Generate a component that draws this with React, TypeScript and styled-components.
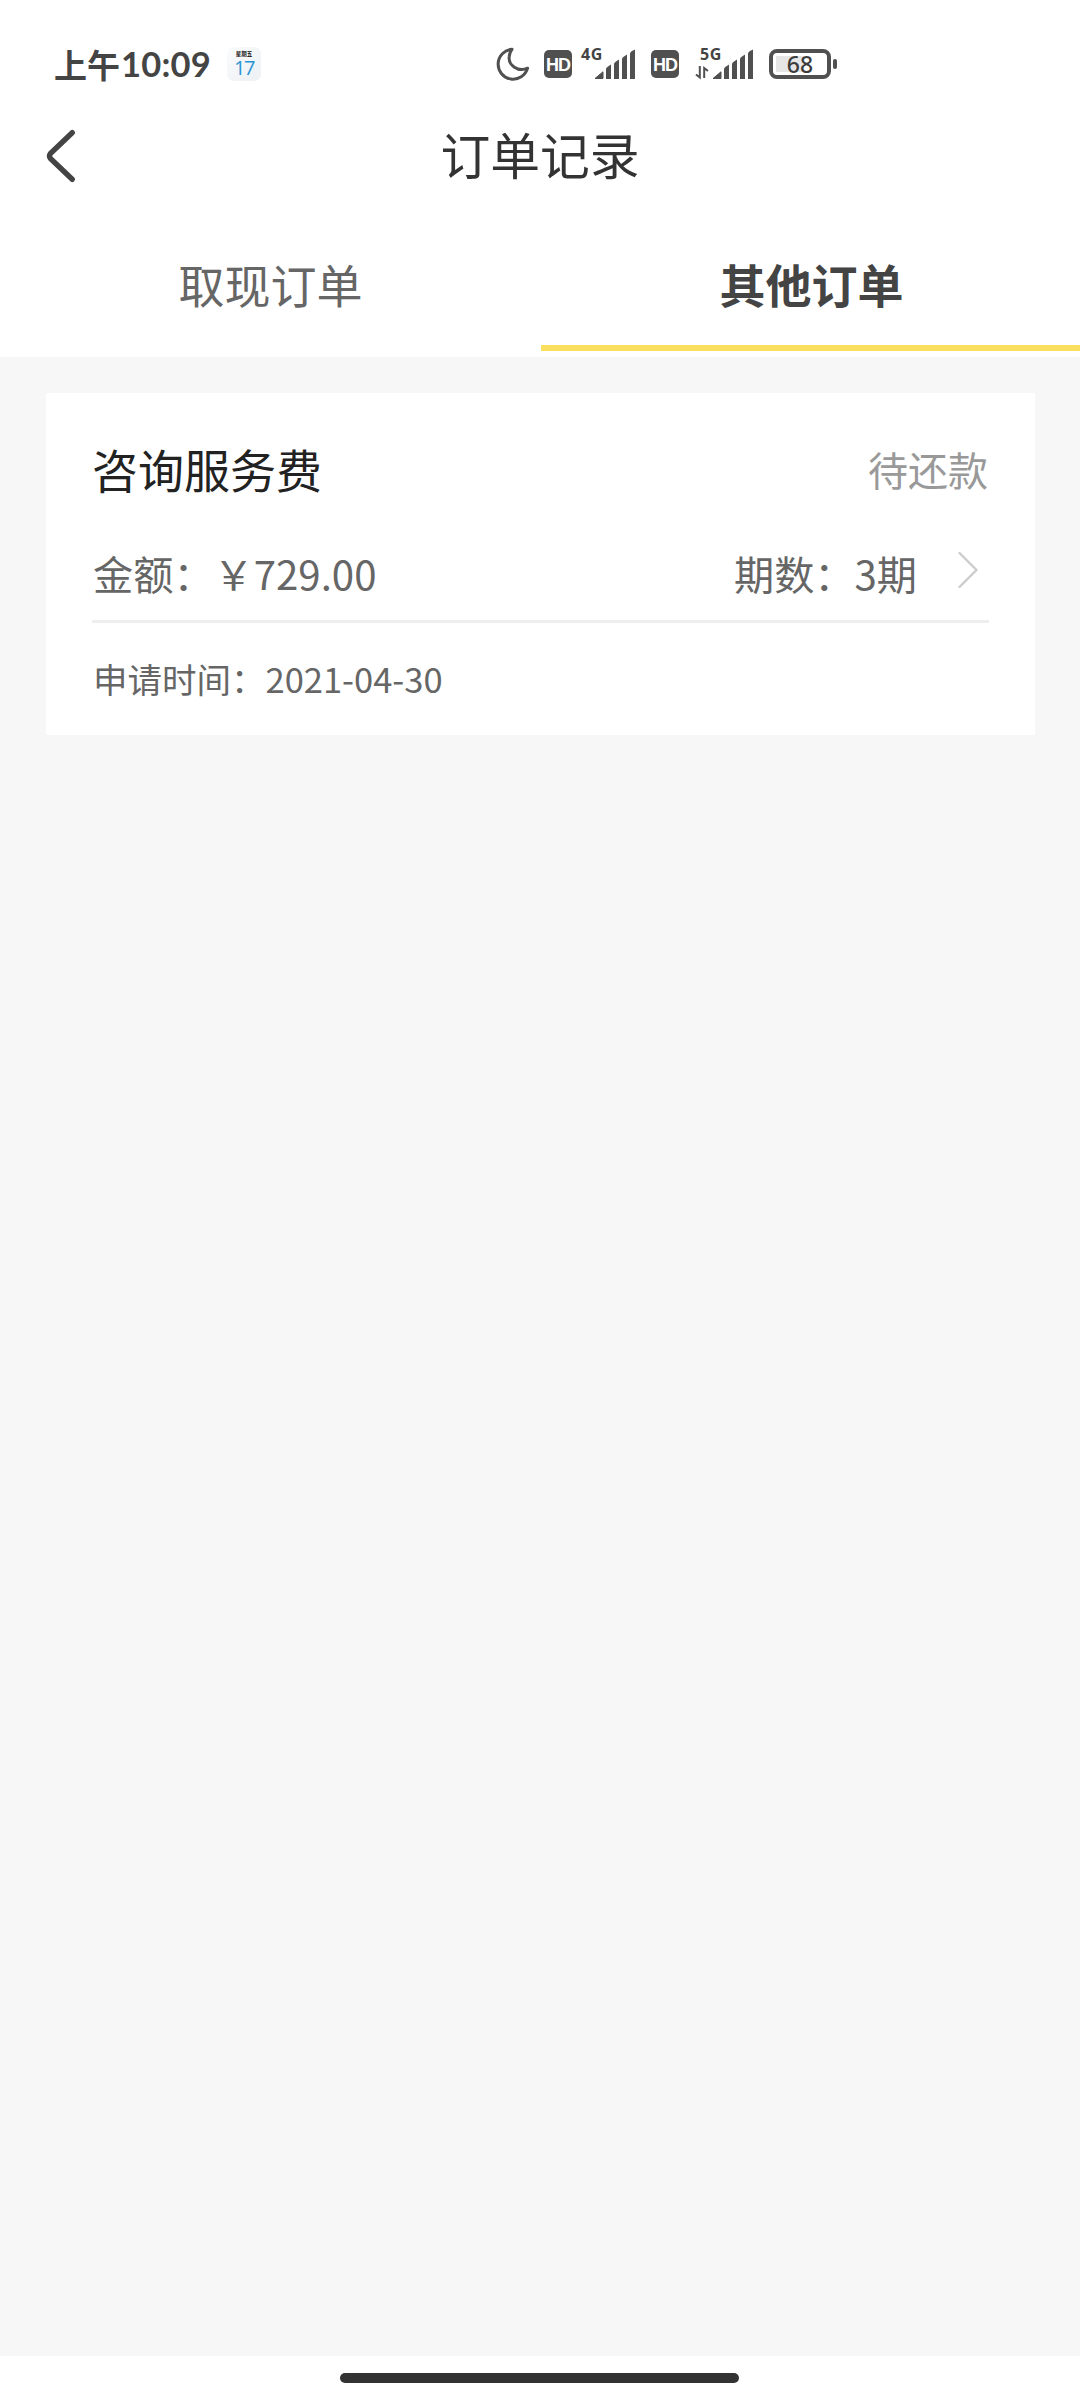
import React from "react";
import styled, { createGlobalStyle } from "styled-components";

const GlobalStyle = createGlobalStyle`
  * { box-sizing: border-box; }
  body {
    margin: 0;
    background: #f7f7f7;
    font-family: "Noto Sans CJK SC", "Noto Sans", sans-serif;
  }
`;

const Screen = styled.div`
  width: 1080px;
  height: 2400px;
  display: flex;
  flex-direction: column;
  background: #f7f7f7;
  overflow: hidden;
`;

const StatusBar = styled.div`
  height: 112px;
  flex: none;
  padding: 16px 0 0 54px;
  display: flex;
  align-items: center;
  background: #fff;
  color: #444;
`;

const Clock = styled.div`
  display: flex;
  align-items: center;
  width: 173px;
  height: 40px;
  line-height: 40px;
  font-size: 33px;
  font-weight: 700;
  white-space: nowrap;
`;

const ClockDigits = styled.span`
  font-family: Lato, sans-serif;
  font-size: 34.5px;
  font-weight: 700;
  letter-spacing: 0.2px;
  padding-left: 1px;
`;

const CalendarBadge = styled.div`
  width: 34px;
  height: 34px;
  border-radius: 7px;
  background: linear-gradient(135deg, #fafbfc, #edf1f4);
  display: flex;
  flex-direction: column;
  align-items: center;
  padding-top: 3px;
`;

const Weekday = styled.span`
  font-size: 5.5px;
  line-height: 8px;
  font-weight: 700;
  color: #111;
`;

const DayNumber = styled.span`
  font-family: "Open Sans", sans-serif;
  font-size: 20px;
  line-height: 19px;
  letter-spacing: -1.5px;
  color: #2a94d6;
`;

const StatusIcons = styled.div`
  display: flex;
  align-items: center;
  margin-left: 235px;
`;

const HdBadge = styled.span`
  width: 28px;
  height: 28px;
  margin-left: 14px;
  border-radius: 5px;
  background: #505050;
  color: #fff;
  display: flex;
  align-items: center;
  justify-content: center;
  font-family: "Liberation Sans", sans-serif;
  font-size: 18px;
  line-height: 28px;
  font-weight: 700;
  letter-spacing: -1px;
  padding-top: 1px;
`;

const Signal = styled.div<{ $gap: number; $width: number }>`
  display: flex;
  align-items: flex-start;
  margin-left: ${(p) => p.$gap}px;
  width: ${(p) => p.$width}px;
  height: 32px;
`;

const SignalSvg = styled.svg`
  display: block;
  overflow: visible;
`;

const Battery = styled.div`
  width: 62px;
  height: 30px;
  margin-left: 16px;
  border: 4px solid #505050;
  border-radius: 8px;
  display: flex;
  align-items: center;
  justify-content: center;
  background: linear-gradient(90deg, #e6e6e6 60%, #fff 60%) 3px 3px / 46px 16px no-repeat;
  font-family: "Noto Sans", sans-serif;
  font-size: 23px;
  line-height: 22px;
  font-weight: 500;
  color: #3c3c3c;
`;

const BatteryTip = styled.span`
  width: 4px;
  height: 10px;
  margin-left: 2px;
  border-radius: 2px;
  background: #505050;
`;

const NavBar = styled.header`
  height: 84px;
  flex: none;
  display: grid;
  grid-template-columns: 120px 1fr 120px;
  align-items: center;
  background: #fff;
`;

const BackIcon = styled.svg`
  display: block;
  margin: 4px 0 0 40px;
`;

const NavTitle = styled.h1`
  margin: 0 0 2px;
  text-align: center;
  font-size: 49.8px;
  line-height: 60px;
  font-weight: 400;
  color: #333;
`;

const TabBar = styled.nav`
  height: 161px;
  flex: none;
  display: flex;
  background: #fff;
  padding-bottom: 6px;
`;

const Tab = styled.div<{ $active?: boolean }>`
  flex: none;
  width: ${(p) => (p.$active ? 539 : 541)}px;
  display: flex;
  align-items: center;
  justify-content: center;
  padding: 24px 0 0 ${(p) => (p.$active ? 2 : 0)}px;
  border-bottom: 6px solid ${(p) => (p.$active ? "#fbe060" : "transparent")};
  font-size: 46px;
  line-height: 60px;
  font-weight: ${(p) => (p.$active ? 700 : 400)};
  color: ${(p) => (p.$active ? "#444" : "#666")};
`;

const Content = styled.main`
  flex: 1;
  padding: 36px 45px 0 46px;
`;

const Card = styled.section`
  height: 342px;
  padding: 45px 46px 0;
  background: #fff;
  display: flex;
  flex-direction: column;
`;

const Row = styled.div<{ $top?: number }>`
  display: flex;
  align-items: center;
  height: 60px;
  line-height: 60px;
  margin-top: ${(p) => p.$top ?? 0}px;
  white-space: nowrap;
`;

const ProductName = styled.h2`
  margin: 0;
  flex: 1;
  font-size: 46px;
  font-weight: 400;
  color: #222;
`;

const OrderState = styled.span`
  padding: 1px 1px 0 0;
  font-size: 40px;
  color: #999;
`;

const Field = styled.span<{ $grow?: boolean }>`
  flex: ${(p) => (p.$grow ? 1 : "none")};
  padding-left: ${(p) => (p.$grow ? 1 : 0)}px;
  font-size: 40.2px;
  color: #666;
`;

const MoreIcon = styled.svg`
  display: block;
  margin: -6px 10px 0 40px;
`;

const Divider = styled.hr`
  width: 100%;
  height: 3px;
  margin: 17px 0 0;
  border: 0;
  background: #eee;
`;

const ApplyTime = styled.div`
  flex: 1;
  display: flex;
  align-items: center;
  padding: 0 0 2px 1px;
  font-size: 34.5px;
  color: #666;
`;

const HomeBar = styled.footer`
  height: 44px;
  flex: none;
  display: flex;
  padding: 17px 0 0 340px;
  background: #fff;
`;

const HomePill = styled.div`
  width: 399px;
  height: 10px;
  border-radius: 5px;
  background: #333;
`;

const Moon = () => (
  <SignalSvg width="34" height="34" viewBox="0 0 34 34">
    <path
      d="M16 2.2A15 15 0 1 0 31.6 21.2C22 25.500 12 18 13.200 9.500Q13.700 5 16 2.200Z"
      fill="none"
      stroke="#505050"
      strokeWidth="3"
      strokeLinejoin="round"
    />
  </SignalSvg>
);

const Bars = ({ x }: { x: number }) => (
  <g transform={`translate(${x} 0)`} fill="#505050">
    <path d="M0 30.500 L8 23.800 V30.500 Z" stroke="#505050" strokeLinejoin="round" />
    <path d="M11 31V21q0-1.500 2-2.500l3-2V31Z" />
    <path d="M19 31V16q0-1.500 2-2.500l3-2V31Z" />
    <path d="M27 31V11q0-1.500 2-2.500l3-2V31Z" />
    <path d="M35 31V5.500q0-1.500 2-2.500l3-1.500V31Z" />
  </g>
);

const NetworkLabel = ({ x, children }: { x: number; children: string }) => (
  <text x={x} y="12" fontFamily="Open Sans" fontSize="16" fontWeight="700" letterSpacing="0.6" fill="#444">
    {children}
  </text>
);

export default function App() {
  return (
    <>
      <GlobalStyle />
      <Screen>
        <StatusBar>
          <Clock>
            上午<ClockDigits>10:09</ClockDigits>
          </Clock>
          <CalendarBadge>
            <Weekday>星期五</Weekday>
            <DayNumber>17</DayNumber>
          </CalendarBadge>
          <StatusIcons>
            <Moon />
            <HdBadge>HD</HdBadge>
            <Signal $gap={9} $width={56}>
              <SignalSvg width="56" height="32">
                <NetworkLabel x={0}>4G</NetworkLabel>
                <Bars x={14} />
              </SignalSvg>
            </Signal>
            <HdBadge>HD</HdBadge>
            <Signal $gap={16} $width={58}>
              <SignalSvg width="58" height="32">
                <NetworkLabel x={5}>5G</NetworkLabel>
                <path d="M4.800 18V29.500L1 26.500M9.200 30V20L13 23" fill="none" stroke="#505050" strokeWidth="2" />
                <Bars x={18} />
              </SignalSvg>
            </Signal>
            <Battery>68</Battery>
            <BatteryTip />
          </StatusIcons>
        </StatusBar>

        <NavBar>
          <BackIcon width="40" height="56" viewBox="0 0 40 56">
            <path
              d="M32.200 4.700L10.400 25.500Q8.600 28 10.400 30.500L32.200 51.300"
              fill="none"
              stroke="#444"
              strokeWidth="5.400"
              strokeLinecap="round"
            />
          </BackIcon>
          <NavTitle>订单记录</NavTitle>
        </NavBar>

        <TabBar>
          <Tab>取现订单</Tab>
          <Tab $active>其他订单</Tab>
        </TabBar>

        <Content>
          <Card>
            <Row>
              <ProductName>咨询服务费</ProductName>
              <OrderState>待还款</OrderState>
            </Row>
            <Row $top={45}>
              <Field $grow>金额：￥729.00</Field>
              <Field>期数：3期</Field>
              <MoreIcon width="22" height="38" viewBox="0 0 22 38">
                <path
                  d="M2.500 2L19.500 19L2.500 36"
                  fill="none"
                  stroke="#ccc"
                  strokeWidth="2.400"
                  strokeLinecap="round"
                  strokeLinejoin="round"
                />
              </MoreIcon>
            </Row>
            <Divider />
            <ApplyTime>申请时间：2021-04-30</ApplyTime>
          </Card>
        </Content>

        <HomeBar>
          <HomePill />
        </HomeBar>
      </Screen>
    </>
  );
}
